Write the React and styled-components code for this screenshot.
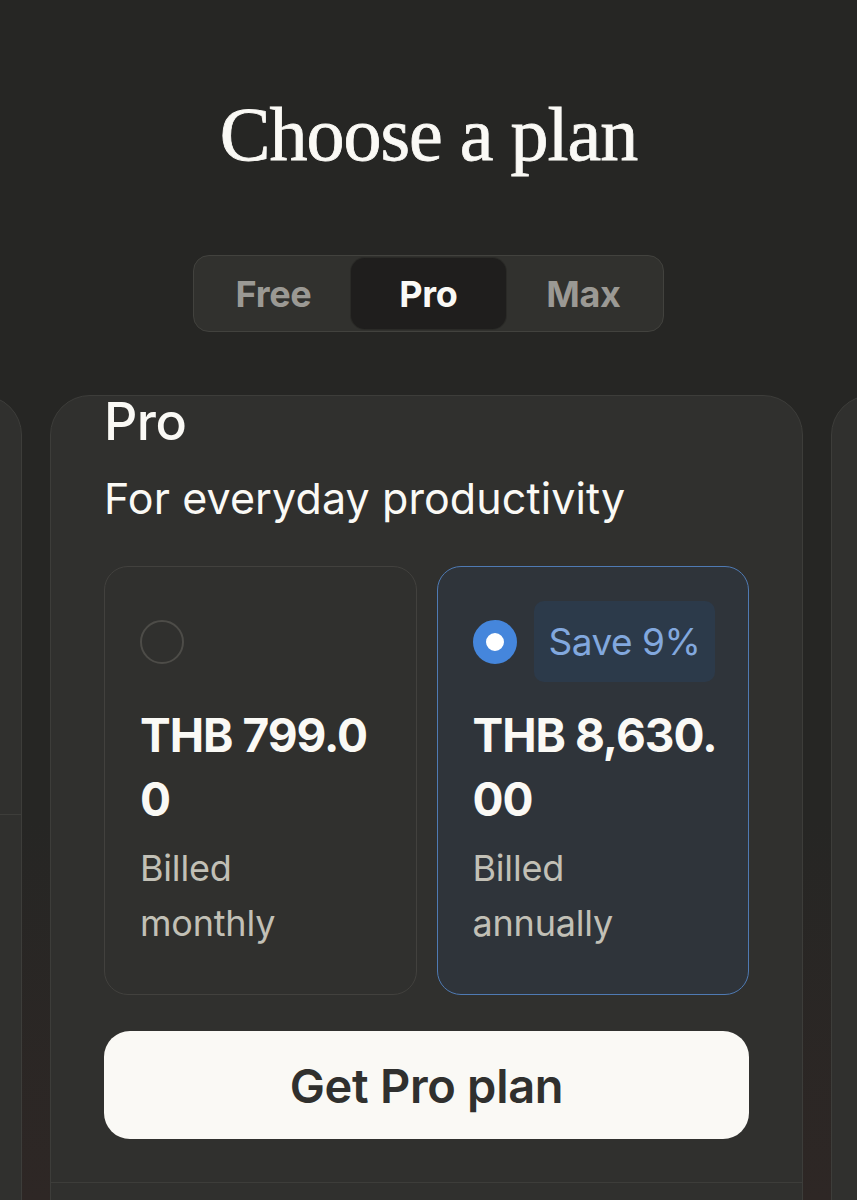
import React from 'react';
import styled, { createGlobalStyle } from 'styled-components';

const GlobalStyle = createGlobalStyle`
  html, body {
    margin: 0;
    padding: 0;
    background: #262624;
  }
  body {
    font-family: Inter, "Noto Sans", sans-serif;
    -webkit-font-smoothing: antialiased;
  }
`;

const Page = styled.div`
  width: 857px;
  height: 1200px;
  overflow: hidden;
  padding-top: 96px;
  box-sizing: border-box;
  background: linear-gradient(to bottom, #262624 0, #262624 820px, #2e2725 1200px);
`;

const Heading = styled.h1`
  margin: 0;
  text-align: center;
  font-family: "Liberation Serif", "DejaVu Serif", serif;
  font-weight: 400;
  font-size: 76px;
  line-height: 1;
  letter-spacing: -1px;
  color: #faf9f5;
  -webkit-text-stroke: 0.8px #faf9f5;
`;

const Tabs = styled.div`
  display: flex;
  width: fit-content;
  margin: 83px auto 0;
  padding: 2px;
  border: 1px solid #42423e;
  border-radius: 16px;
  background: #31312e;
`;

const Tab = styled.div`
  width: 155px;
  height: 71px;
  display: flex;
  align-items: center;
  justify-content: center;
  border-radius: 14px;
  font-size: 36px;
  font-weight: 700;
  letter-spacing: -0.3px;
  color: ${p => (p.$active ? '#faf9f5' : '#9b9994')};
  background: ${p => (p.$active ? '#1f1e1d' : 'transparent')};
  box-shadow: ${p => (p.$active ? '0 0 0 1px #2a2a27' : 'none')};
`;

const Carousel = styled.div`
  display: flex;
  justify-content: center;
  gap: 28px;
  margin-top: 63px;
  padding-right: 4px;
`;

const Card = styled.div`
  flex: 0 0 753px;
  height: 900px;
  box-sizing: border-box;
  border: 1px solid #3d3d3a;
  border-radius: 40px;
  background: #30302e;
  display: flex;
  flex-direction: column;
`;

const CardBody = styled.div`
  padding: 0 53px 43px;
  height: ${p => (p.$height ? `${p.$height}px` : 'auto')};
  border-bottom: 1px solid #3d3d3a;
  box-sizing: border-box;
`;

const PlanName = styled.h2`
  margin: 0;
  font-size: 52px;
  font-weight: 500;
  line-height: 1;
  letter-spacing: -0.5px;
  color: #faf9f5;
`;

const PlanTagline = styled.p`
  margin: 29px 0 0;
  font-size: 43px;
  font-weight: 400;
  line-height: 1;
  letter-spacing: 0.1px;
  color: #faf9f5;
`;

const Options = styled.div`
  display: grid;
  grid-template-columns: 1fr 1fr;
  gap: 20px;
  margin-top: 46px;
`;

const Option = styled.div`
  box-sizing: border-box;
  height: 429px;
  padding: 34px 10px 0 35px;
  border-radius: 24px;
  border: 1px solid ${p => (p.$selected ? '#4f7ab3' : '#42413e')};
  background: ${p => (p.$selected ? '#2f343a' : '#30302e')};
`;

const OptionTop = styled.div`
  display: flex;
  align-items: center;
  gap: 17px;
  height: 81px;
`;

const Radio = styled.span`
  flex: none;
  width: 44px;
  height: 44px;
  box-sizing: border-box;
  border-radius: 50%;
  border: ${p => (p.$checked ? '13px solid #4586dc' : '2px solid #4d4c48')};
  background: ${p => (p.$checked ? '#ffffff' : 'transparent')};
`;

const Badge = styled.span`
  display: flex;
  align-items: center;
  height: 81px;
  padding: 0 15px;
  box-sizing: border-box;
  border-radius: 10px;
  background: #2c3a4a;
  color: #82a8de;
  font-size: 37px;
  letter-spacing: -0.5px;
`;

const Price = styled.div`
  margin-top: 21px;
  width: 246px;
  font-size: 46px;
  font-weight: 700;
  line-height: 64px;
  letter-spacing: -1px;
  color: #faf9f5;
  word-break: break-all;
`;

const Billing = styled.div`
  margin-top: 10px;
  width: 220px;
  font-size: 36px;
  line-height: 55px;
  letter-spacing: -0.2px;
  color: #c2c0b6;
`;

const CtaButton = styled.button`
  display: block;
  width: 100%;
  height: 108px;
  margin-top: 36px;
  border: none;
  border-radius: 26px;
  background: #faf9f5;
  color: #30302e;
  font-family: inherit;
  font-size: 47px;
  font-weight: 600;
  letter-spacing: -0.3px;
  cursor: pointer;
`;

function BillingOption({ selected, price, label, save }) {
  return (
    <Option $selected={selected}>
      <OptionTop>
        <Radio $checked={selected} />
        {save && <Badge>{save}</Badge>}
      </OptionTop>
      <Price>{price}</Price>
      <Billing>{label}</Billing>
    </Option>
  );
}

export default function App() {
  return (
    <Page>
      <GlobalStyle />
      <Heading>Choose a plan</Heading>
      <Tabs>
        <Tab>Free</Tab>
        <Tab $active>Pro</Tab>
        <Tab>Max</Tab>
      </Tabs>
      <Carousel>
        <Card>
          <CardBody $height={419} />
        </Card>
        <Card>
          <CardBody>
            <PlanName>Pro</PlanName>
            <PlanTagline>For everyday productivity</PlanTagline>
            <Options>
              <BillingOption price="THB 799.00" label="Billed monthly" />
              <BillingOption selected price="THB 8,630.00" label="Billed annually" save="Save 9%" />
            </Options>
            <CtaButton>Get Pro plan</CtaButton>
          </CardBody>
        </Card>
        <Card />
      </Carousel>
    </Page>
  );
}
